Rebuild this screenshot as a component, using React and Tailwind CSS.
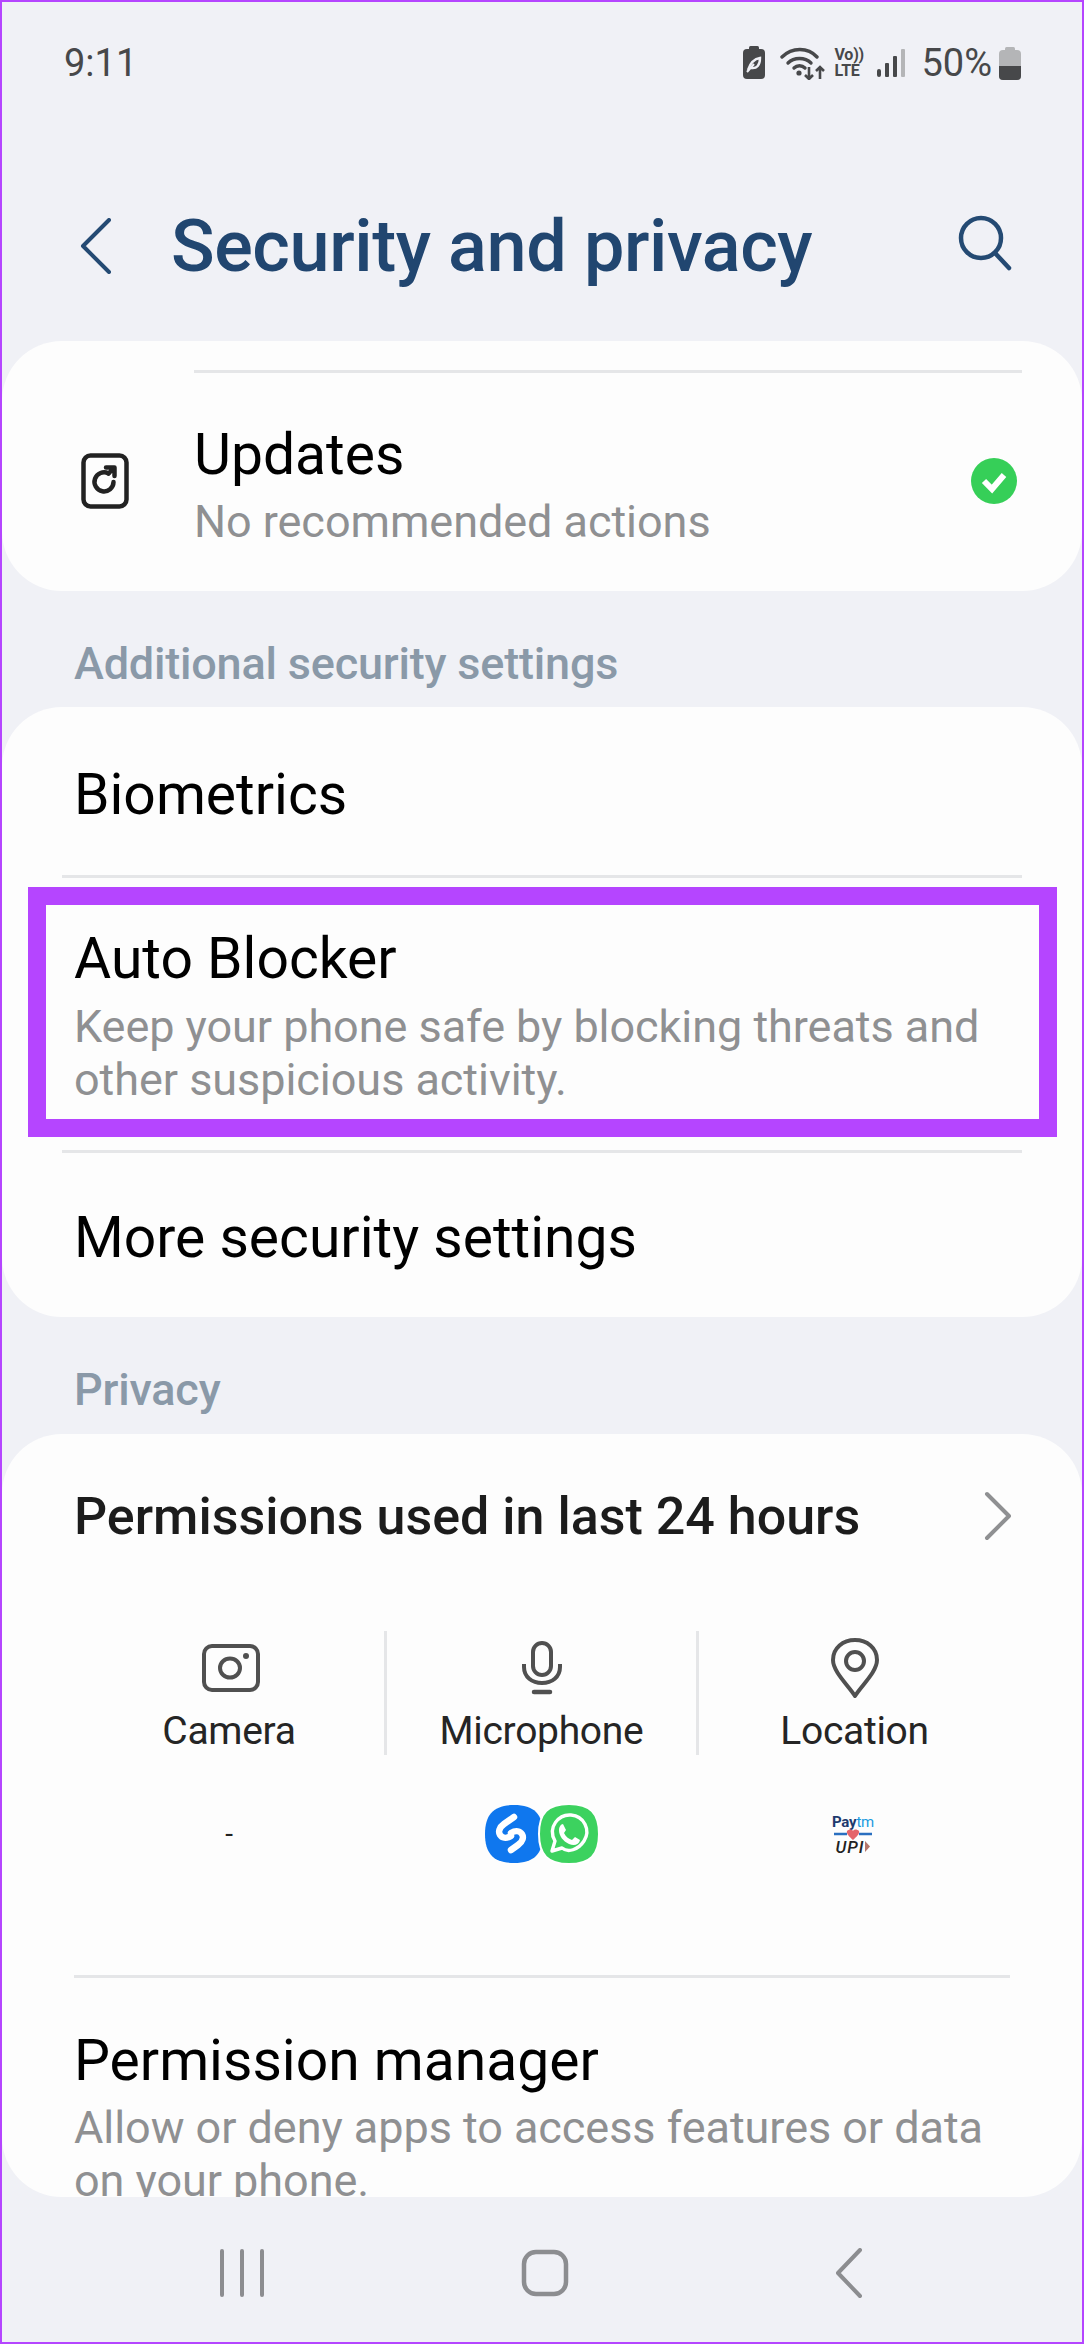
const Divider = ({ className = '' }) => <div className={`h-[3px] bg-[#e5e6e8] ${className}`} />;

const Title = ({ children }) => (
    <div className="text-[57px] leading-[60px] text-black">{children}</div>
);

const Sub = ({ children, className = '' }) => (
    <div className={`text-[45px] leading-[53px] text-[#8f9092] tracking-[-0.05px] ${className}`}>{children}</div>
);

const SectionLabel = ({ children, className = '' }) => (
    <div className={`mx-[72px] text-[45px] leading-[50px] font-medium text-[#8a99a8] tracking-[-0.2px] ${className}`}>{children}</div>
);

const StatusIcons = () => (
    <div className="flex items-center">
        <svg width="24" height="34" viewBox="0 0 24 34">
            <rect x="7" y="0" width="10" height="5" rx="1.5" fill="#47484a" />
            <rect x="1" y="3" width="22" height="30" rx="4" fill="#47484a" />
            <path d="M6 24 C8 18 11 13 18 12 C18 19 15 23 9 22" fill="none" stroke="#f0f1f6" strokeWidth="2.4" />
            <path d="M5 26 L12 18" stroke="#f0f1f6" strokeWidth="2" />
        </svg>
        <svg width="46" height="34" viewBox="0 0 46 34" className="ml-[14px]">
            <g fill="none" stroke="#47484a" strokeWidth="3.4" strokeLinecap="round">
                <path d="M2 11 C12 1 28 1 37 11" />
                <path d="M8 17 C14 11 25 11 31 17" />
                <path d="M14 22 C17 19 22 19 25 22" />
            </g>
            <circle cx="19" cy="27" r="2.6" fill="#47484a" />
            <path d="M29 21 V33 M25 29 L29 33 L33 29 M40 33 V21 M36 25 L40 21 L44 25" fill="none" stroke="#47484a" strokeWidth="2.6" />
        </svg>
        <div className="ml-[8px] w-[30px] text-[16px] leading-[16px] font-bold text-[#47484a] tracking-[-0.2px]">
            <div className="whitespace-nowrap">Vo))</div>
            <div>LTE</div>
        </div>
        <svg width="28" height="30" viewBox="0 0 28 30" className="ml-[13px]">
            <rect x="0" y="21" width="4" height="8" rx="2" fill="#47484a" />
            <rect x="8" y="15" width="4" height="14" rx="1" fill="#47484a" />
            <rect x="16" y="8" width="4" height="21" rx="1" fill="#47484a" />
            <rect x="24" y="1" width="4" height="28" rx="1" fill="#b4b5b7" />
        </svg>
        <span className="ml-[16px] text-[38px] leading-[40px] text-[#47484a]">50%</span>
        <svg width="22" height="33" viewBox="0 0 22 33" className="ml-[7px]">
            <rect x="6" y="0" width="10" height="5" rx="1.5" fill="#b4b5b7" />
            <rect x="0" y="3" width="22" height="30" rx="4" fill="#b4b5b7" />
            <path d="M0 19 H22 V29 A4 4 0 0 1 18 33 H4 A4 4 0 0 1 0 29 Z" fill="#47484a" />
        </svg>
    </div>
);

const Shazam = () => (
    <svg width="60" height="60" viewBox="0 0 60 60">
        <path d="M30 1 C50 1 59 10 59 30 C59 50 50 59 30 59 C10 59 1 50 1 30 C1 10 10 1 30 1 Z" fill="#0f77ee" />
        <path d="M30 13 L20 20 C10 27 17 38 27 32 M27 29 C37 23 44 34 34 41 L27 46" fill="none" stroke="#fff" strokeWidth="6.5" strokeLinecap="round" />
    </svg>
);

const WhatsApp = () => (
    <svg width="62" height="62" viewBox="0 0 62 62">
        <path d="M31 1 C52 1 61 10 61 31 C61 52 52 61 31 61 C10 61 1 52 1 31 C1 10 10 1 31 1 Z" fill="#3cd25f" stroke="#fff" strokeWidth="2" />
        <path d="M14 48 L17 38 C9 24 21 11 33 12 C46 13 53 27 46 38 C40 47 30 50 24 45 Z" fill="none" stroke="#fff" strokeWidth="3.4" strokeLinejoin="round" />
        <path d="M25 21 L28 27 L26 30 C28 34 31 36 34 37 L37 34 L42 37 C41 42 36 43 31 41 C25 38 21 33 21 27 C21 24 23 21 25 21 Z" fill="#fff" />
    </svg>
);

const Paytm = () => (
    <div className="flex flex-col items-center w-[40px]">
        <div className="text-[15px] leading-[14px] font-bold tracking-[-0.2px] text-[#1d3a6e]">Pay<span className="text-[#1b9be0] font-normal">tm</span></div>
        <svg width="38" height="11" viewBox="0 0 38 11">
            <path d="M0 5 H13 M25 5 H38" stroke="#2a6fc0" strokeWidth="2.5" />
            <path d="M13 2 C15 0 18 0 19 2 C20 0 23 0 25 2 C26 5 22 8 19 11 C16 8 12 5 13 2 Z" fill="#e5646a" />
        </svg>
        <div className="flex items-center">
            <span className="text-[17px] leading-[14px] italic font-medium tracking-[1px] text-[#222]">UPI</span>
            <svg width="6" height="11" viewBox="0 0 6 11">
                <path d="M1 0 L6 5.5 L1 11 Z" fill="#b5766a" />
            </svg>
        </div>
    </div>
);

const PermissionIcon = ({ name }) => {
    if (name === 'camera') {
        return (
            <svg width="58" height="48" viewBox="0 0 58 48" fill="none" stroke="#505050" strokeWidth="4" className="ml-[3px]">
                <rect x="2" y="2" width="54" height="44" rx="8" />
                <ellipse cx="28" cy="24" rx="10" ry="9.5" />
                <circle cx="44" cy="12" r="3" fill="#505050" stroke="none" />
            </svg>
        );
    }
    if (name === 'mic') {
        return (
            <svg width="40" height="54" viewBox="0 0 40 54" fill="none" stroke="#505050" strokeWidth="4">
                <rect x="11" y="2" width="18" height="32" rx="9" />
                <path d="M2 23 V26 C2 36 10 42 20 42 C30 42 38 36 38 26 V23" />
                <path d="M12 51 H28" strokeWidth="4.5" strokeLinecap="round" />
            </svg>
        );
    }
    return (
        <svg width="48" height="60" viewBox="0 0 48 60" fill="none" stroke="#505050" strokeWidth="4" strokeLinejoin="round">
            <path d="M24 58 C18 48 2 34 2 22 C2 10 12 2 24 2 C36 2 46 10 46 22 C46 34 30 48 24 58 Z" />
            <circle cx="24" cy="23" r="9" />
        </svg>
    );
};

const PermissionColumn = ({ icon, label, withDivider }) => (
    <div className={`flex flex-col items-center h-[124px] ${withDivider ? 'border-l-[3px] border-[#e5e6e8]' : ''}`}>
        <div className="h-[77px] flex items-center pb-[4px]">
            <PermissionIcon name={icon} />
        </div>
        <div className="text-[39px] leading-[46px] text-[#252525] tracking-[-0.3px]">{label}</div>
    </div>
);

const App = () => {
    return (
        <div
            className="relative w-[1084px] h-[2344px] border-2 border-[#b545ff] bg-[#f0f1f6] overflow-hidden"
            style={{ fontFamily: 'Roboto, sans-serif' }}
        >
            {/* status bar */}
            <div className="h-[122px] flex items-center justify-between pl-[62px] pr-[61px]">
                <span className="text-[38px] leading-[40px] text-[#47484a]">9:11</span>
                <StatusIcons />
            </div>

            {/* header */}
            <div className="h-[217px] pt-[26px] flex items-center pl-[78px] pr-[70px]">
                <svg width="32" height="56" viewBox="0 0 32 56" fill="none" stroke="#244a73" strokeWidth="4" strokeLinecap="round" strokeLinejoin="round">
                    <path d="M29 2 L3 28 L29 54" />
                </svg>
                <h1 className="ml-[59px] mt-[3px] text-[72px] leading-[84px] font-medium text-[#214670] tracking-[-0.4px] whitespace-nowrap">Security and privacy</h1>
                <svg width="54" height="56" viewBox="0 0 54 56" fill="none" stroke="#244a73" strokeWidth="4.5" strokeLinecap="round" className="ml-auto mb-[6px]">
                    <circle cx="23" cy="23" r="20" />
                    <path d="M37 38 L51 53" />
                </svg>
            </div>

            {/* updates card */}
            <div className="h-[250px] rounded-[60px] bg-[#fdfdfd] pt-[29px]">
                <Divider className="ml-[192px] mr-[60px]" />
                <div className="flex items-center pt-[52px] pl-[79px] pr-[65px]">
                    <svg width="48" height="56" viewBox="0 0 48 56" fill="none" stroke="#222" strokeWidth="4.5" strokeLinecap="round" strokeLinejoin="round" className="mb-[12px] shrink-0">
                        <rect x="2.5" y="2.5" width="43" height="51" rx="7" />
                        <path d="M27.5 20.5 A9.5 9.5 0 1 0 32.5 29" />
                        <path d="M25 14.5 H33.5 V23 M33 15 L27.5 20.5" />
                    </svg>
                    <div className="ml-[65px] flex-1">
                        <Title>Updates</Title>
                        <Sub className="mt-[10px]">No recommended actions</Sub>
                    </div>
                    <svg width="46" height="46" viewBox="0 0 46 46" className="mb-[12px]">
                        <circle cx="23" cy="23" r="23" fill="#36cf58" />
                        <path d="M13 23 L21 31 L33 17" fill="none" stroke="#fff" strokeWidth="6" />
                    </svg>
                </div>
            </div>

            <SectionLabel className="pt-[48px] pb-[18px] box-content">Additional security settings</SectionLabel>

            {/* additional security */}
            <div className="rounded-[60px] bg-[#fdfdfd] pt-[58px] pb-[49px]">
                <div className="px-[72px]"><Title>Biometrics</Title></div>
                <Divider className="mt-[50px] mx-[60px]" />
                <div className="px-[72px] mt-[51px]">
                    <Title>Auto Blocker</Title>
                    <Sub className="mt-[11px]">Keep your phone safe by blocking threats and<br />other suspicious activity.</Sub>
                </div>
                <Divider className="mt-[44px] mx-[60px]" />
                <div className="px-[72px] mt-[55px]"><Title>More security settings</Title></div>
            </div>

            <SectionLabel className="pt-[48px] pb-[19px] box-content">Privacy</SectionLabel>

            {/* privacy */}
            <div className="h-[763px] rounded-[60px] bg-[#fdfdfd] pt-[53px] overflow-hidden">
                <div className="flex items-center justify-between pl-[72px] pr-[70px]">
                    <div className="text-[52px] leading-[60px] font-medium text-[#1c1c1c]">Permissions used in last 24 hours</div>
                    <svg width="28" height="50" viewBox="0 0 28 50" fill="none" stroke="#8f9092" strokeWidth="4" strokeLinecap="round" strokeLinejoin="round" className="mb-[3px]">
                        <path d="M3 3 L25 25 L3 47" />
                    </svg>
                </div>
                <div className="mx-[72px] mt-[84px] grid grid-cols-[310px_312px_314px]">
                    <PermissionColumn icon="camera" label="Camera" />
                    <PermissionColumn icon="mic" label="Microphone" withDivider />
                    <PermissionColumn icon="pin" label="Location" withDivider />
                </div>
                <div className="mx-[72px] mt-[48px] h-[60px] grid grid-cols-[310px_312px_314px] items-center justify-items-center">
                    <span className="text-[28px] text-[#222]">-</span>
                    <div className="flex items-center pl-[4px]">
                        <Shazam />
                        <div className="-ml-[6px] relative"><WhatsApp /></div>
                    </div>
                    <Paytm />
                </div>
                <Divider className="mt-[112px] mx-[72px]" />
                <div className="px-[72px] mt-[53px]">
                    <Title>Permission manager</Title>
                    <Sub className="mt-[10px]">Allow or deny apps to access features or data<br />on your phone.</Sub>
                </div>
            </div>

            {/* nav bar */}
            <div className="h-[145px] flex items-center pt-[7px] pl-[217px]">
                <svg width="46" height="48" viewBox="0 0 46 48" stroke="#8c8d90" strokeWidth="4" strokeLinecap="round">
                    <path d="M3 2 V46 M23 2 V46 M43 2 V46" />
                </svg>
                <svg width="48" height="48" viewBox="0 0 48 48" fill="none" stroke="#8c8d90" strokeWidth="4.5" className="ml-[256px]">
                    <rect x="3" y="3" width="42" height="42" rx="12" />
                </svg>
                <svg width="28" height="50" viewBox="0 0 28 50" fill="none" stroke="#8c8d90" strokeWidth="4" strokeLinecap="round" strokeLinejoin="round" className="ml-[266px]">
                    <path d="M25 2 L3 25 L25 48" />
                </svg>
            </div>

            {/* highlight box drawn over the Auto Blocker row */}
            <div className="absolute left-[26px] top-[885px] w-[1029px] h-[250px] border-[18px] border-[#b545ff] pointer-events-none" />
        </div>
    );
};

export default App;
